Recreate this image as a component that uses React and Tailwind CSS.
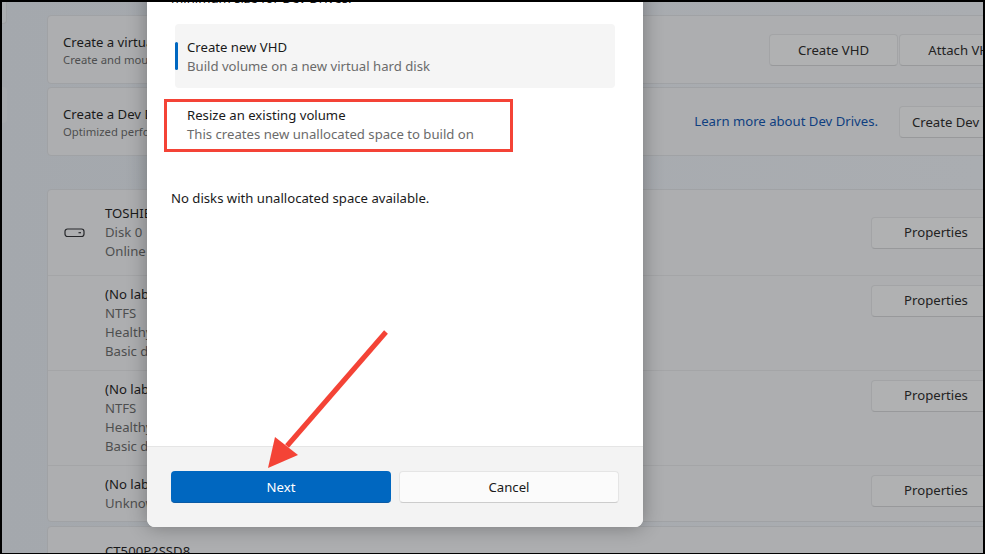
import React from 'react';

const Btn = ({ children, className = '' }) => (
  <div className={`h-[32px] flex items-center justify-center rounded-[4px] border border-[#a3a4a6] border-b-[#98999b] bg-[#b0b1b2] text-[13.15px] text-[#222] shrink-0 ${className}`}>
    {children}
  </div>
);

const DiskRow = ({ height, lines, noBorder, btnClass }) => (
  <div className={`flex justify-between pl-[57px] pr-[43px] ${noBorder ? '' : 'border-t border-[#a4a5a7]'}`} style={{ height }}>
    <div className="flex items-center">
      <div className="text-[13.15px] leading-[19px] whitespace-nowrap">
        {lines.map((l, i) => (
          <div key={i} className={i === 0 ? 'text-[#1a1a1a]' : 'text-[#4d4e4f]'}>{l}</div>
        ))}
      </div>
    </div>
    <Btn className={`w-[130px] ${btnClass}`}>Properties</Btn>
  </div>
);

const App = () => {
  return (
    <div className="w-[985px] h-[554px] overflow-hidden border-t-2 border-x-2 border-b border-black bg-black font-['Noto_Sans',sans-serif]">
      <div className="relative w-[981px] h-[551px] overflow-hidden bg-gradient-to-r from-[#a4a8ad] to-[#aaadb1]">
        {/* settings page behind the dialog */}
        <div className="w-[998px] ml-[45px] pt-[13px]">
          <div className="h-[69px] flex items-center justify-between pl-[15px] pr-[16px] border border-[#a0a2a5] rounded-[4px] bg-[#adaeb0]">
            <div className="whitespace-nowrap pt-[1px]">
              <div className="text-[13.15px] leading-[19px] text-[#1a1a1a]">Create a virtual hard disk (VHD)</div>
              <div className="text-[11.3px] leading-[16px] text-[#4d4e4f]">Create and mount a virtual hard disk</div>
            </div>
            <div className="flex gap-[1px]">
              <Btn className="w-[129px] pt-[2px]">Create VHD</Btn>
              <Btn className="w-[129px] pt-[2px]">Attach VHD</Btn>
            </div>
          </div>
          <div className="mt-[3px] h-[69px] flex items-center justify-between pl-[15px] pr-[16px] border border-[#a0a2a5] rounded-[4px] bg-[#adaeb0]">
            <div className="whitespace-nowrap pt-[1px]">
              <div className="text-[13.15px] leading-[19px] text-[#1a1a1a]">Create a Dev Drive</div>
              <div className="text-[11.3px] leading-[16px] text-[#4d4e4f]">Optimized performance for developer workloads</div>
            </div>
            <div className="flex items-center gap-[21px]">
              <div className="pt-[1px] text-[13.15px] text-[#0f3f80] whitespace-nowrap">Learn more about Dev Drives.</div>
              <Btn className="w-[129px] pt-[2px]">Create Dev Drive</Btn>
            </div>
          </div>
          <div className="mt-[33px] border border-[#a0a2a5] rounded-[4px] bg-[#adaeb0]">
            <div className="relative">
              <svg className="absolute left-[16px] top-[37px]" width="22" height="12" viewBox="0 0 22 12" fill="none">
                <rect x="1" y="2" width="19" height="7.5" rx="2.5" stroke="#26272a" strokeWidth="1.2" />
                <path d="M14.5 5.7h2.5" stroke="#26272a" strokeWidth="1.2" />
              </svg>
              <DiskRow noBorder height="85px" btnClass="mt-[27px]" lines={['TOSHIBA MQ04ABF100', 'Disk 0', 'Online']} />
            </div>
            <DiskRow height="95px" btnClass="mt-[9px]" lines={['(No label)', 'NTFS', 'Healthy', 'Basic data partition']} />
            <DiskRow height="95px" btnClass="mt-[9px]" lines={['(No label)', 'NTFS', 'Healthy', 'Basic data partition']} />
            <DiskRow height="56px" btnClass="mt-[9px]" lines={['(No label)', 'Unknown']} />
          </div>
          <div className="mt-[4px] h-[60px] border border-[#a0a2a5] rounded-[4px] bg-[#adaeb0] pl-[57px] pt-[15px] text-[13.15px] leading-[19px] text-[#1a1a1a]">
            CT500P2SSD8
          </div>
        </div>

        {/* nav pane remnants */}
        <div className="absolute left-0 top-[-4px] w-[5px] h-[26px] border-r border-b border-[#a0a2a5] rounded-br-[4px] bg-[#abaeb1]" />
        <div className="absolute left-0 top-[85px] w-[5px] h-[36px] rounded-r-[4px] bg-[#a8abaf]" />

        {/* dialog */}
        <div className="absolute left-[145px] top-[-20px] w-[496px] h-[545px] flex flex-col rounded-[8px] overflow-hidden bg-white shadow-[0_0_20px_rgba(0,0,0,0.32)]">
          <div className="flex-1 pl-[24px] pr-[28px] text-[13.15px]">
            <div className="h-[19px] mt-[7px] leading-[19px] text-[#1a1a1a] whitespace-nowrap">minimum size for Dev Drives.</div>
            <div className="relative mt-[16px] ml-[4px] h-[64px] rounded-[4px] bg-[#f5f5f5] pl-[12px] pt-[14px]">
              <div className="absolute left-0 top-[18px] w-[3px] h-[28px] rounded-full bg-[#0067c0]" />
              <div className="leading-[19px] text-[#1a1a1a]">Create new VHD</div>
              <div className="leading-[19px] text-[#6b6b6b]">Build volume on a new virtual hard disk</div>
            </div>
            <div className="ml-[16px] mt-[8px] pt-[10px]">
              <div className="leading-[19px] text-[#1a1a1a]">Resize an existing volume</div>
              <div className="leading-[19px] text-[#6b6b6b]">This creates new unallocated space to build on</div>
            </div>
            <div className="mt-[45px] leading-[19px] text-[#1a1a1a]">No disks with unallocated space available.</div>
          </div>
          <div className="h-[81px] shrink-0 flex gap-[8px] pl-[24px] pr-[24px] pt-[24px] border-t border-[#e5e5e5] bg-[#f3f3f3] text-[13.15px]">
            <div className="w-[220px] h-[32px] pt-[2px] flex items-center justify-center rounded-[4px] bg-[#0067c0] border-b border-[#0a5aa5] text-white">Next</div>
            <div className="w-[220px] h-[32px] pt-[1px] flex items-center justify-center rounded-[4px] bg-[#fbfbfb] border border-[#e5e5e5] border-b-[#ccc] text-[#1a1a1a]">Cancel</div>
          </div>
        </div>

        {/* annotations */}
        <div className="absolute left-[162px] top-[97px] w-[349px] h-[53px] border-[3px] border-[#f44336]" />
        <svg className="absolute left-0 top-0 pointer-events-none" width="981" height="551" viewBox="0 0 981 551" fill="none">
          <path d="M384 330 L285 444" stroke="#f44336" strokeWidth="5" />
          <path d="M266 466 L273 435 L296 453 Z" fill="#f44336" />
        </svg>
      </div>
    </div>
  );
};

export default App;
